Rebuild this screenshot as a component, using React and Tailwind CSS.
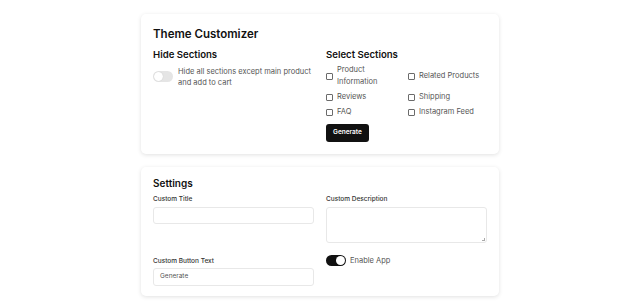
import React from "react";

function Toggle({ on }) {
  return (
    <div
      className={
        "relative shrink-0 w-[20px] h-[11px] rounded-full " +
        (on ? "bg-[#111111]" : "bg-[#e5e5e5]")
      }
    >
      <div
        className={
          "absolute top-[1px] w-[9px] h-[9px] rounded-full bg-white " +
          (on ? "left-[10px]" : "left-[1px] shadow-[0_0_1px_rgba(0,0,0,0.2)]")
        }
      />
    </div>
  );
}

function Box() {
  return <div className="shrink-0 w-[7px] h-[7px] border border-[#6b6b6b] rounded-[1px] bg-white" />;
}

function Check({ children }) {
  return (
    <div className="flex items-center gap-[4px]">
      <Box />
      <span className="text-[7.5px] leading-[12px] text-[#555555]">{children}</span>
    </div>
  );
}

export default function App() {
  return (
    <div
      className="min-h-screen bg-white flex flex-col items-center pt-[14px] gap-[13px]"
      style={{ fontFamily: "Inter, 'Noto Sans', sans-serif" }}
    >
      <div className="w-[358px] bg-white rounded-[5px] shadow-[0_1px_4px_rgba(0,0,0,0.12)] px-[12px] pt-[12px] pb-[12px]">
        <h2 className="text-[11.5px] leading-[16px] font-semibold text-[#111111]">Theme Customizer</h2>
        <div className="grid grid-cols-2 gap-x-[12px] mt-[6px]">
          <div>
            <h3 className="text-[9.6px] leading-[14px] font-semibold text-[#111111]">Hide Sections</h3>
            <div className="flex items-start gap-[5px] mt-[5px]">
              <div className="mt-[4px]">
                <Toggle on={false} />
              </div>
              <p className="text-[7.5px] leading-[10.5px] text-[#555555]">
                Hide all sections except main product
                <br />
                and add to cart
              </p>
            </div>
          </div>
          <div>
            <h3 className="text-[9.6px] leading-[14px] font-semibold text-[#111111]">Select Sections</h3>
            <div className="grid grid-cols-[82px_1fr] gap-y-[3px] mt-[2px] items-center">
              <div className="flex items-center gap-[4px]">
                <Box />
                <span className="text-[7.5px] leading-[12px] text-[#555555]">
                  Product
                  <br />
                  Information
                </span>
              </div>
              <Check>Related Products</Check>
              <Check>Reviews</Check>
              <Check>Shipping</Check>
              <Check>FAQ</Check>
              <Check>Instagram Feed</Check>
            </div>
            <button className="mt-[6px] w-[43px] h-[18px] rounded-[3px] bg-[#111111] text-white text-[6.5px] font-semibold flex items-center justify-center">
              Generate
            </button>
          </div>
        </div>
      </div>

      <div className="w-[358px] bg-white rounded-[5px] shadow-[0_1px_4px_rgba(0,0,0,0.12)] px-[12px] pt-[9px] pb-[10px]">
        <h2 className="text-[10px] leading-[14px] font-semibold text-[#111111]">Settings</h2>
        <div className="grid grid-cols-2 gap-x-[12px] gap-y-[13px] mt-[4px]">
          <div>
            <label className="block text-[6.5px] leading-[10px] font-medium text-[#333333]">Custom Title</label>
            <div className="mt-[3px] h-[17px] border border-[#e8e8e8] rounded-[3px] bg-white" />
          </div>
          <div>
            <label className="block text-[6.5px] leading-[10px] font-medium text-[#333333]">Custom Description</label>
            <div className="relative mt-[3px] h-[36px] border border-[#e8e8e8] rounded-[3px] bg-white">
              <div className="absolute right-[1px] bottom-[1px] w-[3px] h-[3px] border-r border-b border-[#aaaaaa]" />
            </div>
          </div>
          <div>
            <label className="block text-[6.5px] leading-[10px] font-medium text-[#333333]">Custom Button Text</label>
            <div className="mt-[2px] h-[18px] border border-[#e8e8e8] rounded-[3px] bg-white flex items-center px-[6px]">
              <span className="text-[6.5px] text-[#555555]">Generate</span>
            </div>
          </div>
          <div className="flex items-start gap-[4px] -mt-[1px]">
            <Toggle on={true} />
            <span className="text-[7.5px] leading-[11px] text-[#555555]">Enable App</span>
          </div>
        </div>
      </div>
    </div>
  );
}
